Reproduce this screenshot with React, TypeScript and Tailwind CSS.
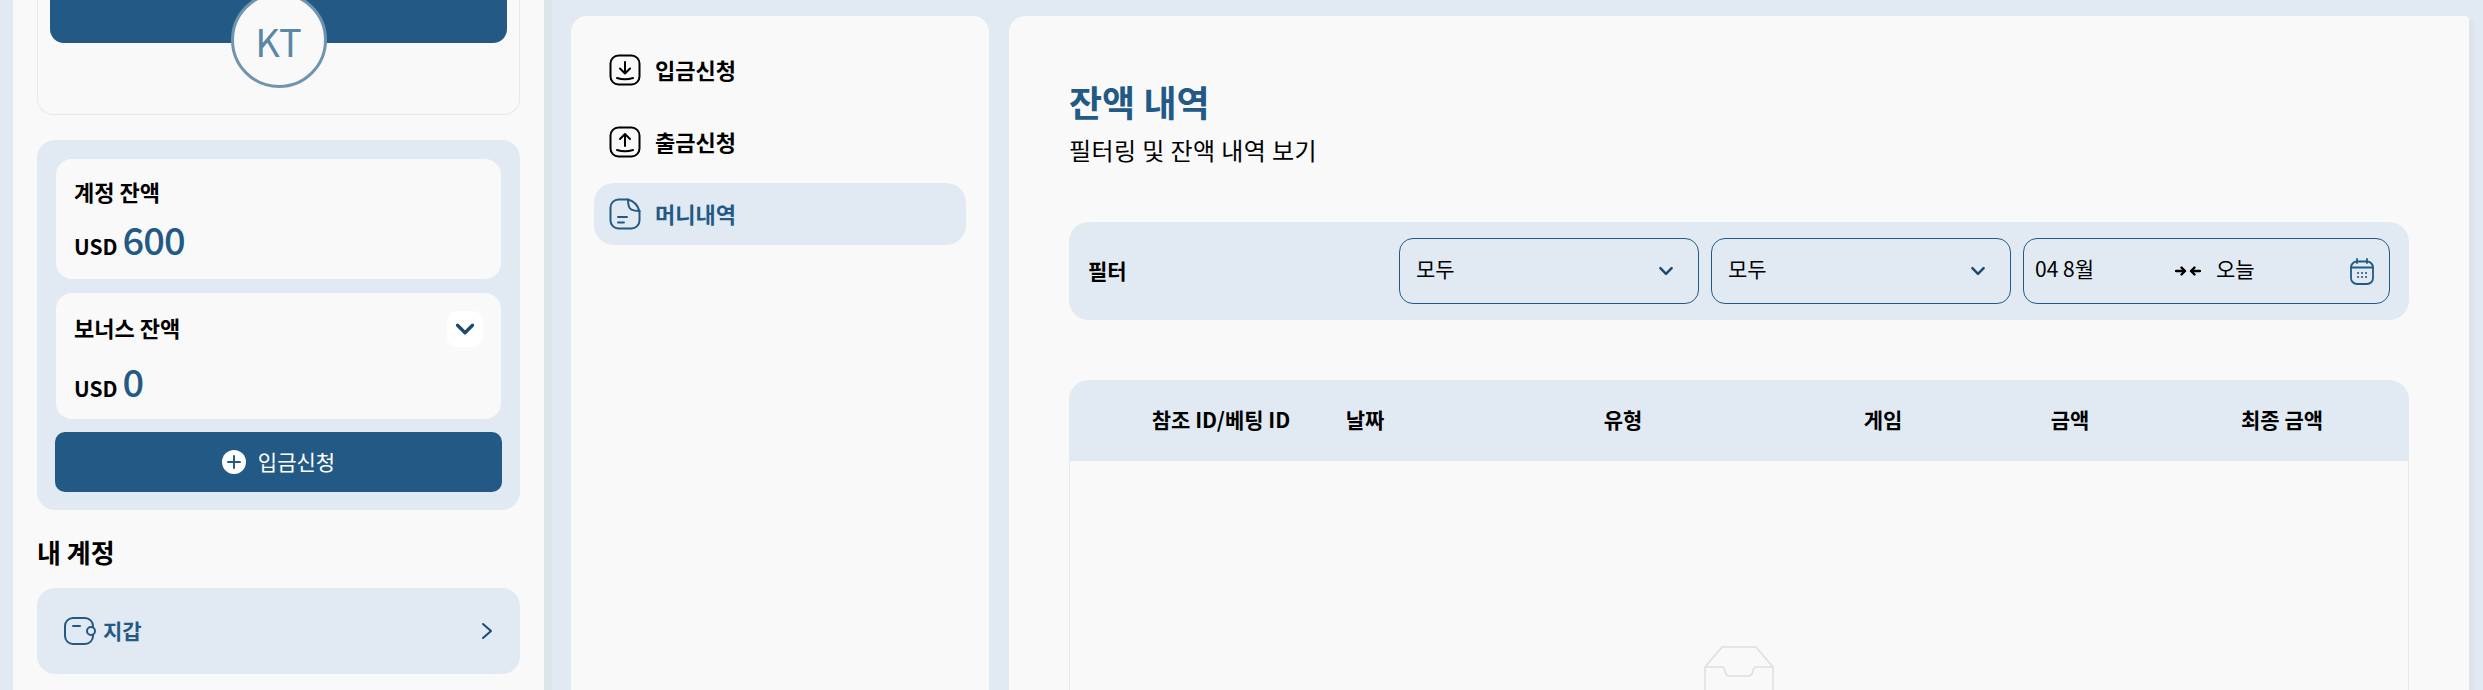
const columns = [
  { label: "참조 ID/베팅 ID" },
  { label: "날짜" },
  { label: "유형" },
  { label: "게임" },
  { label: "금액" },
  { label: "최종 금액" },
];

function DownloadIcon() {
  return (
    <svg width="32" height="32" viewBox="0 0 32 32" fill="none" stroke="currentColor" strokeWidth="2" strokeLinecap="round" strokeLinejoin="round">
      <rect x="1.5" y="1.5" width="29" height="29" rx="8" />
      <path d="M16 8v11M11 14.5l5 5 5-5M8 24c5 1.6 11 1.6 16 0" />
    </svg>
  );
}

function UploadIcon() {
  return (
    <svg width="32" height="32" viewBox="0 0 32 32" fill="none" stroke="currentColor" strokeWidth="2" strokeLinecap="round" strokeLinejoin="round">
      <rect x="1.5" y="1.5" width="29" height="29" rx="8" />
      <path d="M16 20V8M11 13l5-5 5 5M8 24c5 1.6 11 1.6 16 0" />
    </svg>
  );
}

function NoteIcon() {
  return (
    <svg width="32" height="32" viewBox="0 0 32 32" fill="none" stroke="currentColor" strokeWidth="2" strokeLinecap="round" strokeLinejoin="round">
      <path d="M19 1.5H9.5a8 8 0 0 0-8 8v13a8 8 0 0 0 8 8h13a8 8 0 0 0 8-8V13" />
      <path d="M19 1.5c0 6 1 9 3.5 10.2 2 1 5 1.3 8 1.3-1.5-5-5.500-9.800-11.500-11.500Z" />
      <path d="M9 19h9M9 24.500h6" />
    </svg>
  );
}

function WalletIcon() {
  return (
    <svg width="32" height="28" viewBox="0 0 32 28" fill="none" stroke="currentColor" strokeWidth="2" strokeLinecap="round" strokeLinejoin="round">
      <path d="M29 9.500V9a8 8 0 0 0-8-8H9a8 8 0 0 0-8 8v10a8 8 0 0 0 8 8h12a8 8 0 0 0 8-8v-.500" />
      <circle cx="27" cy="14" r="4" />
      <path d="M9 9h7" />
    </svg>
  );
}

function ChevronDown({ size = 18 }: { size?: number }) {
  return (
    <svg width={size} height={size} viewBox="0 0 16 16" fill="none" stroke="#1d4a70" strokeWidth="2.200" strokeLinecap="round" strokeLinejoin="round">
      <path d="M3 5.500l5 5 5-5" />
    </svg>
  );
}

function CalendarIcon() {
  return (
    <svg width="24" height="27" viewBox="0 0 24 27" fill="none" stroke="#235a85" strokeWidth="1.800" strokeLinecap="round">
      <rect x="1" y="3.500" width="22" height="22.500" rx="6" />
      <path d="M1 9.500h22M7 1v4M17 1v4" />
      <path d="M8 15h.1M12 15h.1M16 15h.1M8 19h.1M12 19h.1M16 19h.1" strokeWidth="2" />
    </svg>
  );
}

function Select() {
  return (
    <div className="flex h-[66px] w-[300px] items-center justify-between rounded-[14px] border border-[#235a85] pl-4 pr-[23px] text-[21px]">
      <span className="pb-[4px]">모두</span>
      <ChevronDown />
    </div>
  );
}

export default function App() {
  return (
    <div className="flex h-[690px] w-[2483px] overflow-hidden bg-[#e1eaf2] pl-[13px] font-['Noto_Sans_CJK_KR','Noto_Sans',sans-serif] text-black">
      <aside className="h-full w-[531px] shrink-0 bg-[#f9f9f9] px-[24px]">
        <div className="h-[115px] rounded-b-[16px] border-x border-b border-[#e8e8e8] px-[12px]">
          <div className="relative h-[43px] rounded-b-[14px] bg-[#235a85]">
            <div className="absolute left-1/2 top-[-8px] flex h-[96px] w-[96px] -translate-x-1/2 items-center justify-center rounded-full border-[3px] border-[#7094ad] bg-[#f9f9f9] text-[38px] text-[#5b87a6]">
              KT
            </div>
          </div>
        </div>

        <div className="mt-[25px] h-[370px] rounded-[18px] bg-[#e1eaf2] px-[19px] pt-[19px]">
          <div className="h-[120px] rounded-[16px] bg-[#f9f9f9] px-[18px] pt-[16px]">
            <p className="text-[22px] font-bold leading-[32px]">계정 잔액</p>
            <p className="mt-[10px] flex items-baseline gap-[5px] text-[21px] font-bold leading-[44px]">
              USD <span className="text-[38px] font-medium tracking-[-1px] text-[#235a85]">600</span>
            </p>
          </div>
          <div className="mt-[14px] h-[126px] rounded-[16px] bg-[#f9f9f9] px-[18px] pt-[15px]">
            <div className="flex items-start justify-between">
              <p className="text-[22px] font-bold leading-[38px]">보너스 잔액</p>
              <div className="mt-[3px] flex h-[36px] w-[36px] items-center justify-center rounded-[10px] bg-white">
                <ChevronDown size={24} />
              </div>
            </div>
            <p className="mt-[12px] flex items-baseline gap-[5px] text-[21px] font-bold leading-[44px]">
              USD <span className="text-[38px] font-medium text-[#235a85]">0</span>
            </p>
          </div>
          <div className="mx-[-1px] mt-[13px] flex h-[60px] items-center justify-center gap-[12px] rounded-[10px] bg-[#235a85] text-[21px] text-white">
            <svg width="24" height="24" viewBox="0 0 24 24">
              <circle cx="12" cy="12" r="12" fill="#fff" />
              <path d="M12 6v12M6 12h12" stroke="#235a85" strokeWidth="2" strokeLinecap="round" />
            </svg>
            입금신청
          </div>
        </div>

        <h2 className="mt-[21px] text-[26px] font-bold leading-[42px]">내 계정</h2>
        <div className="mt-[15px] flex h-[86px] items-center justify-between rounded-[18px] bg-[#e1eaf2] pl-[27px] pr-[27px] text-[#235a85]">
          <div className="flex items-center gap-[7px] text-[21px] font-semibold">
            <WalletIcon />
            지갑
          </div>
          <svg width="12" height="18" viewBox="0 0 12 18" fill="none" stroke="#1d4a70" strokeWidth="2" strokeLinecap="round" strokeLinejoin="round">
            <path d="M2 2l8 7-8 7" />
          </svg>
        </div>
      </aside>

      <div className="h-full w-[8px] shrink-0 bg-[#dde4ea]" />

      <nav className="ml-[19px] mt-[16px] flex h-[800px] w-[418px] shrink-0 flex-col gap-[10px] rounded-t-[16px] bg-[#f9f9f9] px-[23px] pt-[23px] text-[22px] font-bold">
        <div className="flex h-[62px] items-center gap-[14px] px-[15px]">
          <DownloadIcon />
          <span className="pb-[2px]">입금신청</span>
        </div>
        <div className="flex h-[62px] items-center gap-[14px] px-[15px]">
          <UploadIcon />
          <span className="pb-[2px]">출금신청</span>
        </div>
        <div className="flex h-[62px] items-center gap-[14px] rounded-[20px] bg-[#e1eaf2] px-[15px] text-[#235a85]">
          <NoteIcon />
          <span className="pb-[2px]">머니내역</span>
        </div>
      </nav>

      <main className="ml-[20px] mt-[16px] h-[800px] w-[1460px] shrink-0 rounded-tl-[16px] rounded-tr-[4px] bg-[#f9f9f9] px-[60px] pt-[60px]">
        <h1 className="text-[36px] font-semibold leading-[50px] text-[#235a85]">잔액 내역</h1>
        <p className="mt-[6px] text-[24px] leading-[36px] tracking-[0.4px]">필터링 및 잔액 내역 보기</p>

        <div className="mt-[54px] flex h-[98px] items-center rounded-[20px] bg-[#e1eaf2] px-[19px]">
          <span className="w-[311px] text-[21px] font-bold">필터</span>
          <div className="flex gap-[12px]">
            <Select />
            <Select />
            <div className="flex h-[66px] w-[367px] items-center rounded-[14px] border border-[#235a85] pl-[11px] pr-[15px] text-[21px]">
              <span className="w-[140px] pb-[4px]">04 8월</span>
              <svg width="26" height="12" viewBox="0 0 26 12" fill="none" stroke="#000" strokeWidth="2.400" strokeLinecap="round" strokeLinejoin="round">
                <path d="M1 6h9M6.500 2.500L10 6l-3.500 3.500M25 6h-9M19.500 2.500L16 6l3.500 3.500" />
              </svg>
              <span className="ml-[15px] pb-[4px]">오늘</span>
              <span className="ml-auto">
                <CalendarIcon />
              </span>
            </div>
          </div>
        </div>

        <div className="mt-[60px]">
          <div className="grid h-[81px] grid-cols-[144px_144px_372px_148px_226px_198px] items-center rounded-t-[20px] bg-[#e1eaf2] pb-[2px] pl-[80px] pr-[28px] text-center text-[21px] font-bold">
            {columns.map((col) => (
              <span key={col.label} className="whitespace-nowrap">{col.label}</span>
            ))}
          </div>
          <div className="flex h-[400px] justify-center border-x border-[#e8e8e8] pt-[185px]">
            <svg width="70" height="70" viewBox="0 0 70 70" fill="none" stroke="#dedede" strokeWidth="1.500" strokeLinejoin="round">
              <path d="M1 21L18 1h34l17 20v48H1V21Z" />
              <path d="M1 21h17c2 0 2.500 1.500 3 4 .6 3 2 5 5 5h18c3 0 4.400-2 5-5 .500-2.500 1-4 3-4h17" />
            </svg>
          </div>
        </div>
      </main>

      <div className="mt-[20px] h-full w-[6px] shrink-0 bg-[#dde4ea]" />
    </div>
  );
}
